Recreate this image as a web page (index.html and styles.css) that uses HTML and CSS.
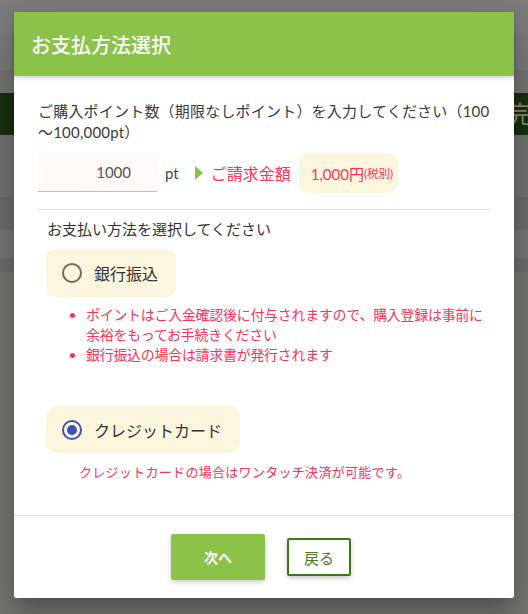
FILE: index.html
```html
<!DOCTYPE html>
<html lang="ja">
<head>
<meta charset="utf-8">
<title>お支払方法選択</title>
<link rel="stylesheet" href="styles.css">
</head>
<body>
<div class="page">
  <div class="stripe s1"></div>
  <div class="stripe s2"></div>
  <div class="stripe s3"><span class="bg-char">完</span></div>
  <div class="stripe s4"></div>
  <div class="stripe s5"></div>
  <div class="stripe s6"></div>
  <div class="stripe s7"></div>
  <div class="stripe s8"></div>
</div>

<div class="modal">
  <div class="modal-header">お支払方法選択</div>
  <div class="modal-body">
    <p class="intro">ご購入ポイント数（期限なしポイント）を入力してください（100<wbr>〜100,000pt）</p>
    <div class="amount-row">
      <input class="pt-input" type="text" value="1000">
      <span class="pt-unit">pt</span>
      <span class="arrow"></span>
      <span class="bill-label">ご請求金額</span>
      <span class="price"><span class="price-num">1,000円</span><span class="price-tax">(税別)</span></span>
    </div>
    <div class="divider"></div>
    <p class="select-label">お支払い方法を選択してください</p>

    <label class="option">
      <span class="radio"></span>
      <span class="option-text">銀行振込</span>
    </label>
    <ul class="notes">
      <li>ポイントはご入金確認後に付与されますので、購入登録は事前に余裕をもってお手続きください</li>
      <li>銀行振込の場合は請求書が発行されます</li>
    </ul>

    <label class="option option-card">
      <span class="radio checked"></span>
      <span class="option-text">クレジットカード</span>
    </label>
    <p class="card-note">クレジットカードの場合はワンタッチ決済が可能です。</p>
  </div>
  <div class="modal-footer">
    <button class="btn-next" type="button">次へ</button>
    <button class="btn-back" type="button">戻る</button>
  </div>
</div>
</body>
</html>
```

FILE: styles.css
```css
* { box-sizing: border-box; }

html, body {
  margin: 0;
  padding: 0;
  width: 528px;
  height: 614px;
  overflow: hidden;
  font-family: Lato, "Noto Sans CJK JP", sans-serif;
}

.page {
  display: flex;
  flex-direction: column;
  height: 614px;
}

.stripe { width: 100%; }
.s1 { height: 70px; background: #7e7e7e; }
.s2 { height: 23px; background: #787878; }
.s3 {
  height: 42px;
  background: #1b3111;
  display: flex;
  justify-content: flex-end;
  align-items: center;
  overflow: hidden;
}
.bg-char {
  font-size: 24px;
  color: #8a8c74;
  margin-right: -4px;
  line-height: 1;
}
.s4 { height: 62px; background: #757575; }
.s5 { height: 33px; background: #6f6f6f; }
.s6 { height: 28px; background: #7a7a7a; }
.s7 { height: 14px; background: #6f6f6f; }
.s8 { flex: 1; background: #777a72; }

.modal {
  position: absolute;
  left: 14px;
  top: 12px;
  width: 500px;
  height: 586px;
  background: #fff;
  border-radius: 2px;
  box-shadow: 0 11px 15px -7px rgba(0,0,0,.2), 0 24px 38px 3px rgba(0,0,0,.14), 0 9px 46px 8px rgba(0,0,0,.12);
  display: flex;
  flex-direction: column;
}

.modal-header {
  height: 64px;
  background: #8bc34a;
  color: #fff;
  font-size: 20px;
  font-weight: 500;
  padding-left: 17px;
  display: flex;
  align-items: center;
  box-shadow: 0 2px 4px rgba(0,0,0,.18);
  position: relative;
  z-index: 1;
}

.modal-body {
  flex: 1;
  padding: 25px 24px 0 24px;
  color: #333;
}

.intro {
  margin: 0;
  font-size: 15px;
  line-height: 21px;
  letter-spacing: 0.2px;
  color: #3a3a3a;
  line-break: loose;
}

.amount-row {
  display: flex;
  align-items: center;
  margin-top: 10px;
  height: 40px;
}

.pt-input {
  width: 119px;
  height: 39px;
  border: none;
  border-bottom: 1px solid #bdbdbd;
  background: #fff9f8;
  font-family: Lato, "Noto Sans CJK JP", sans-serif;
  font-size: 15px;
  color: #555;
  text-align: right;
  padding: 0 26px 0 0;
  margin-top: -1px;
  outline: none;
}

.pt-unit {
  margin-left: 8px;
  font-size: 15px;
  color: #444;
}

.arrow {
  width: 0;
  height: 0;
  border-top: 7px solid transparent;
  border-bottom: 7px solid transparent;
  border-left: 8px solid #8bc34a;
  margin-left: 16px;
}

.bill-label {
  margin-left: 8px;
  font-size: 16px;
  color: #f3365a;
}

.price {
  margin-left: 8px;
  height: 40px;
  padding: 0 5px 0 12px;
  background: #fdf6df;
  border-radius: 10px;
  display: flex;
  align-items: center;
  color: #f3365a;
}
.price-num { font-size: 15px; }
.price-tax { font-size: 11.5px; }

.divider {
  height: 1px;
  background: #e0e0e0;
  margin-top: 16px;
}

.select-label {
  margin: 9px 0 0 9px;
  font-size: 15px;
  line-height: 21px;
  color: #333;
}

.option {
  display: inline-flex;
  align-items: center;
  gap: 12px;
  height: 48px;
  padding: 0 18px 0 16px;
  margin: 9px 0 0 8px;
  background: #fdf6df;
  border-radius: 10px;
}

.option-card {
  margin-top: 41px;
  height: 47px;
}

.radio {
  width: 20px;
  height: 20px;
  border-radius: 50%;
  border: 2px solid #6d6a62;
  display: flex;
  align-items: center;
  justify-content: center;
}
.radio.checked { border-color: #3f51b5; }
.radio.checked::after {
  content: "";
  width: 10px;
  height: 10px;
  border-radius: 50%;
  background: #3f51b5;
}

.option-text {
  font-size: 16px;
  color: #333;
}

.notes {
  margin: 8px 0 0 0;
  padding-left: 48px;
  font-size: 14px;
  line-height: 20px;
  letter-spacing: -0.3px;
  color: #f3365a;
}

.card-note {
  margin: 10px 0 0 41px;
  font-size: 13px;
  line-height: 18px;
  letter-spacing: 0.3px;
  color: #f3365a;
}

.modal-footer {
  height: 83px;
  border-top: 1px solid #e0e0e0;
  display: flex;
  align-items: center;
  justify-content: center;
  gap: 22px;
  padding-right: 6px;
}

.btn-next {
  width: 94px;
  height: 46px;
  border: none;
  border-radius: 2px;
  background: #8bc34a;
  color: #fff;
  font-family: Lato, "Noto Sans CJK JP", sans-serif;
  font-size: 14px;
  font-weight: 700;
  box-shadow: 0 2px 5px rgba(0,0,0,.22);
}

.btn-back {
  width: 64px;
  height: 38px;
  border: 2px solid #3e7a12;
  border-radius: 2px;
  background: #fff;
  color: #4b7d24;
  font-family: Lato, "Noto Sans CJK JP", sans-serif;
  font-size: 15px;
  box-shadow: 0 2px 5px rgba(0,0,0,.22);
}
```
